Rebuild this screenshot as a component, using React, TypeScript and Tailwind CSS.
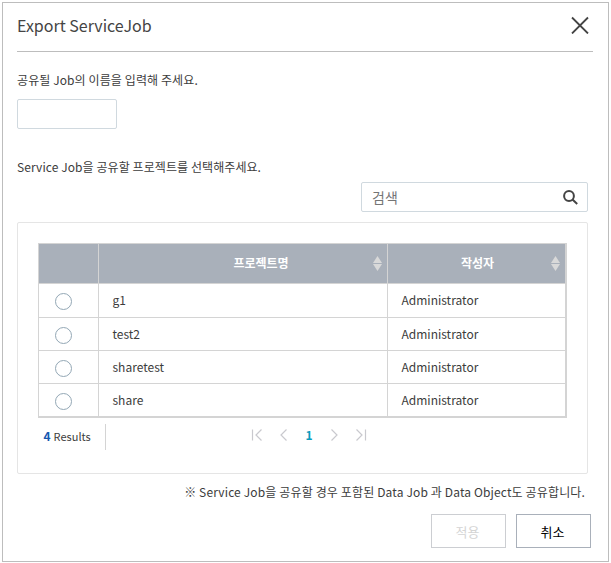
import React from "react";

const projects = [
  { name: "g1", author: "Administrator" },
  { name: "test2", author: "Administrator" },
  { name: "sharetest", author: "Administrator" },
  { name: "share", author: "Administrator" },
];

function SortIcon() {
  return (
    <svg className="block h-[15px] w-[9px]" viewBox="0 0 9 15" fill="#d9d9d9">
      <path d="M4.5 0 9 7H0z" />
      <path d="M0 8h9l-4.500 7z" />
    </svg>
  );
}

function PageIcon({ d }: { d: string }) {
  return (
    <svg className="block h-[12px] w-[12px]" viewBox="0 0 12 12" fill="none" stroke="#c9c9ce" strokeWidth="1.2">
      <path d={d} />
    </svg>
  );
}

export default function App() {
  return (
    <div className="h-[563px] w-[611px] bg-white pl-[2px] pt-[2px] font-['Noto_Sans_CJK_KR',sans-serif] text-[12px] text-[#3c3c3c]">
      <div className="h-[560px] w-[607px] border border-[#bdbdbd] pl-[14px]">
        <header className="flex h-[49px] w-[576px] items-center justify-between border-b border-[#bdbdbd] pr-[4px]">
          <h1 className="-mt-[4px] text-[16px] leading-[24px] text-[#444]">Export ServiceJob</h1>
          <button aria-label="Close" className="-mt-[5px]">
            <svg className="block h-[18px] w-[18px]" viewBox="0 0 18 18" fill="none" stroke="#444" strokeWidth="1.8">
              <path d="M1 1.500l16 16M17 1.500l-16 16" />
            </svg>
          </button>
        </header>
        <p className="mt-[18px] h-[20px] leading-[20px] tracking-[0.1px]">공유될 Job의 이름을 입력해 주세요.</p>
        <input aria-label="Job" className="mt-[9px] block h-[30px] w-[100px] rounded-[2px] border border-[#d0d9df] px-2 outline-none" />
        <p className="mt-[28px] h-[20px] leading-[20px] tracking-[0.08px]">Service Job을 공유할 프로젝트를 선택해주세요.</p>
        <div className="ml-[344px] mt-[5px] flex h-[30px] w-[227px] items-center justify-between rounded-[2px] border border-[#d0d9df] pl-[10px] pr-[9px]">
          <span className="text-[14px] leading-[20px] text-[#757575]">검색</span>
          <svg className="block h-[15px] w-[15px]" viewBox="0 0 15 15" fill="none" stroke="#444" strokeWidth="2">
            <circle cx="6" cy="6" r="4.900" />
            <path d="M9.500 9.500l4.700 4.500" />
          </svg>
        </div>
        <section className="mt-[10px] h-[252px] w-[571px] rounded-[2px] border border-[#e5e5e5] pl-[20px] pt-[20px]">
          <div className="w-[529px] border-b-2 border-l border-r-2 border-t border-[#d4d4d4]">
            <div className="flex h-[40px] border-b border-[#d4d4d4] bg-[#a9b0ba] font-bold text-white">
              <div className="w-[60px] border-r border-[#d4d4d4]" />
              <div className="flex w-[289px] items-center border-r border-[#d4d4d4] pr-[5px]">
                <span className="-mt-[2px] flex-1 pl-[50px] text-center leading-[20px]">프로젝트명</span>
                <SortIcon />
              </div>
              <div className="flex flex-1 items-center pr-[5px]">
                <span className="-mt-[2px] flex-1 pl-[16px] text-center leading-[20px]">작성자</span>
                <SortIcon />
              </div>
            </div>
            {projects.map((p, i) => (
              <div key={p.name} className={`flex leading-[20px] ${i < 3 ? "border-b border-[#d4d4d4]" : ""} ${i === 0 ? "h-[34px]" : i === 3 ? "h-[32px]" : "h-[33px]"}`}>
                <div className="flex w-[60px] items-start border-r border-[#d4d4d4] pl-[16px] pt-[9px]">
                  <span className="h-[17px] w-[17px] rounded-full border border-[#93a7b5]" />
                </div>
                <div className={`flex w-[289px] items-center border-r border-[#d4d4d4] pl-[13.500px] ${i === 0 ? "pb-[2px]" : ""}`}>{p.name}</div>
                <div className={`flex items-center pl-[13.500px] ${i === 0 ? "pb-[2px]" : ""}`}>{p.author}</div>
              </div>
            ))}
          </div>
          <div className="mt-[6px] flex h-[26px] items-center">
            <div className="flex h-[26px] w-[68px] items-center border-r border-[#d4d4d4] pb-[2px] pl-[5.500px] text-[11px] leading-[20px]">
              <b className="mr-[3px] text-[12px] text-[#1558b0]">4</b>Results
            </div>
            <nav className="-mt-[4px] ml-[145px] flex items-center">
              <PageIcon d="M1.500.5v11M10.500.5L5 6l5.500 5.500" />
              <span className="ml-[15px]"><PageIcon d="M8.500.5L3 6l5.500 5.500" /></span>
              <b className="ml-[13px] w-[12px] text-center text-[12px] leading-[20px] text-[#0a9cbd]">1</b>
              <span className="ml-[13px]"><PageIcon d="M3.500.5L9 6l-5.500 5.500" /></span>
              <span className="ml-[15px]"><PageIcon d="M1.500.5L7 6l-5.500 5.500M10.500.5v11" /></span>
            </nav>
          </div>
        </section>
        <p className="mt-[8px] h-[20px] w-[568px] text-right leading-[20px] tracking-[0.14px]">※ Service Job을 공유할 경우 포함된 Data Job 과 Data Object도 공유합니다.</p>
        <footer className="ml-[414px] mt-[12px] flex gap-[10px] text-[13px] leading-[20px]">
          <button className="h-[34px] w-[75px] border border-[#ccced2] pr-[2px] pt-[2px] text-[#d4d4d4]">적용</button>
          <button className="h-[34px] w-[75px] border border-[#a9b0ba] pr-[2px] pt-[2px] text-black">취소</button>
        </footer>
      </div>
    </div>
  );
}
